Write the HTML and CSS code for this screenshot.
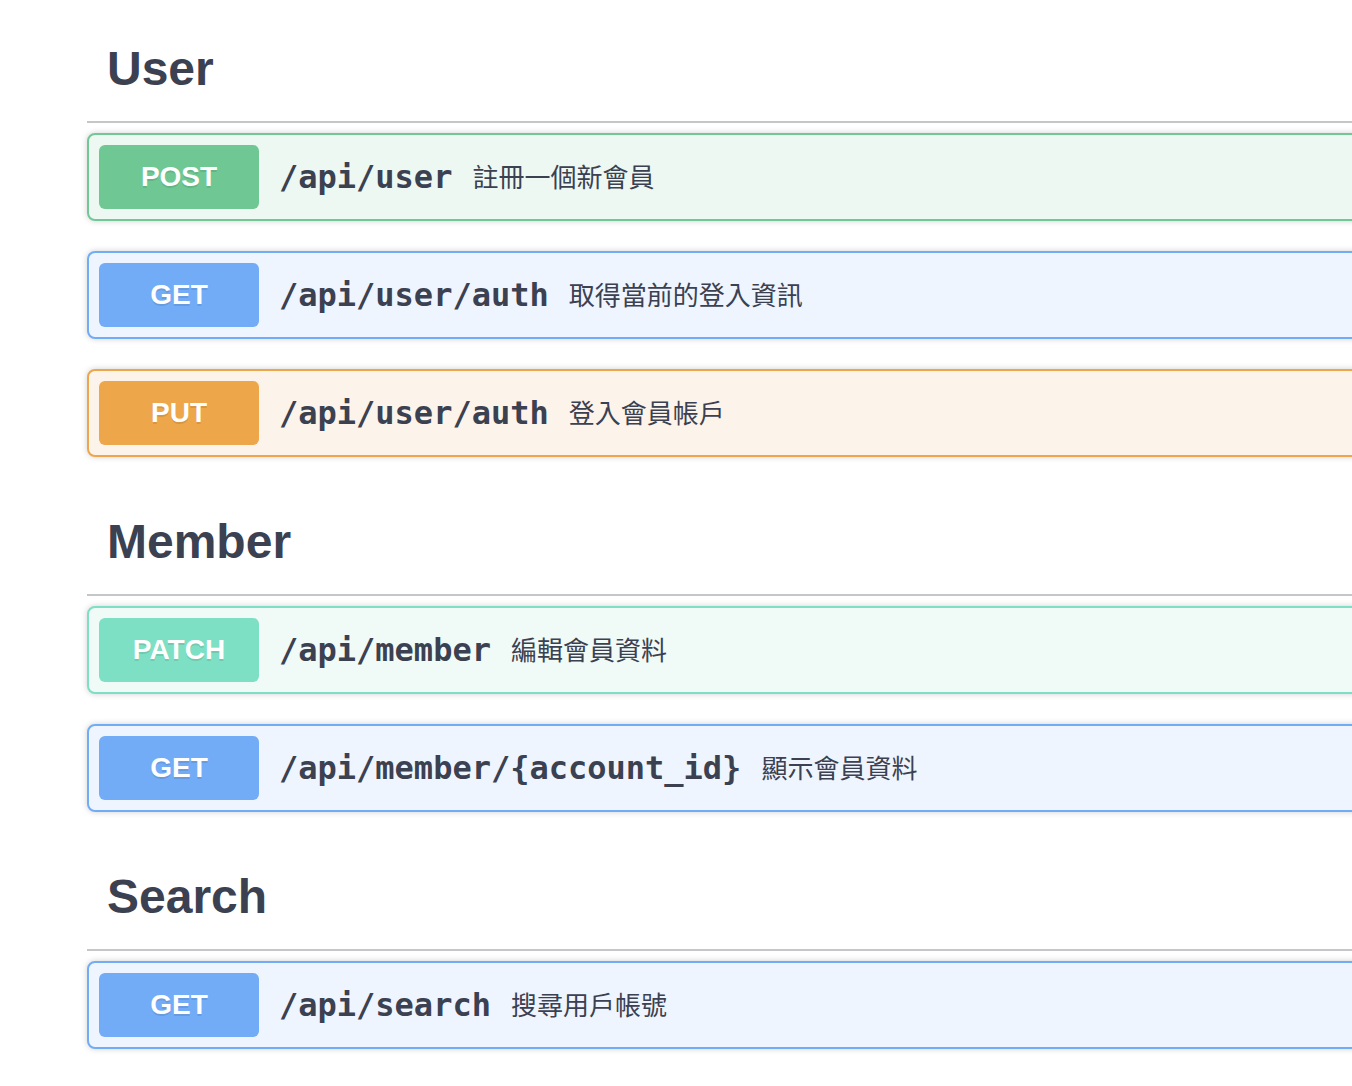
FILE: index.html
```html
<!DOCTYPE html>
<html lang="zh-Hant">
<head>
<meta charset="utf-8">
<title>API</title>
<link rel="stylesheet" href="styles.css">
</head>
<body>
<div class="wrapper">
  <section class="tag-section">
    <h3 class="tag">User</h3>
    <div class="opblock post">
      <span class="method">POST</span>
      <span class="path">/api/user</span>
      <span class="desc">註冊一個新會員</span>
    </div>
    <div class="opblock get">
      <span class="method">GET</span>
      <span class="path">/api/user/auth</span>
      <span class="desc">取得當前的登入資訊</span>
    </div>
    <div class="opblock put">
      <span class="method">PUT</span>
      <span class="path">/api/user/auth</span>
      <span class="desc">登入會員帳戶</span>
    </div>
  </section>
  <section class="tag-section">
    <h3 class="tag">Member</h3>
    <div class="opblock patch">
      <span class="method">PATCH</span>
      <span class="path">/api/member</span>
      <span class="desc">編輯會員資料</span>
    </div>
    <div class="opblock get">
      <span class="method">GET</span>
      <span class="path">/api/member/{account_id}</span>
      <span class="desc">顯示會員資料</span>
    </div>
  </section>
  <section class="tag-section">
    <h3 class="tag">Search</h3>
    <div class="opblock get">
      <span class="method">GET</span>
      <span class="path">/api/search</span>
      <span class="desc">搜尋用戶帳號</span>
    </div>
  </section>
</div>
</body>
</html>
```
FILE: styles.css
```css
html, body {
  margin: 0;
  padding: 0;
  overflow: hidden;
  background: #ffffff;
}

body {
  color: #3b4151;
  font-family: "Liberation Sans", Arial, sans-serif;
}

.wrapper {
  padding: 14px 0 0 87px;
  width: 1400px;
}

.tag {
  margin: 0 0 10px;
  padding: 21px 40px 19px 20px;
  font-size: 48px;
  line-height: 67px;
  font-weight: 700;
  color: #3b4151;
  border-bottom: 2px solid rgba(59, 65, 81, 0.3);
}

.opblock {
  display: flex;
  align-items: center;
  padding: 10px;
  margin: 0 0 30px;
  border: 2px solid;
  border-radius: 8px;
  box-shadow: 0 0 6px rgba(0, 0, 0, 0.19);
}

.method {
  min-width: 160px;
  padding: 12px 0;
  line-height: 40px;
  text-align: center;
  border-radius: 6px;
  font-family: "Liberation Sans", Arial, sans-serif;
  font-size: 28px;
  font-weight: 700;
  color: #ffffff;
  text-shadow: 0 2px 0 rgba(0, 0, 0, 0.1);
}

.path {
  padding: 0 20px;
  font-family: "DejaVu Sans Mono", monospace;
  font-size: 32px;
  font-weight: 700;
  color: #3b4151;
}

.desc {
  padding-bottom: 4px;
  font-family: "Noto Sans CJK TC", sans-serif;
  font-size: 26px;
  color: #3b4151;
}

.post { background: #eef8f3; border-color: #71c896; }
.post .method { background: #6fc894; }

.get { background: #eff5fe; border-color: #72acf6; }
.get .method { background: #72acf7; }

.put { background: #fcf4ea; border-color: #eea64c; }
.put .method { background: #eea64b; }

.patch { background: #f0faf7; border-color: #7ddfc3; }
.patch .method { background: #7ddfc3; }
```
